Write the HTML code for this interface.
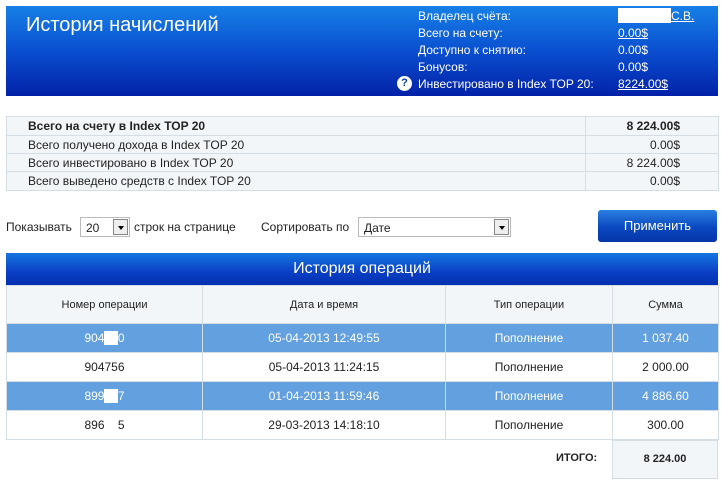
<!DOCTYPE html>
<html><head><meta charset="utf-8"><style>
body{margin:0;width:721px;height:483px;background:#fff;font-family:"Liberation Sans",sans-serif;font-size:12px;color:#222;position:relative;overflow:hidden}
.a{position:absolute}
.hdr{left:6px;top:6px;width:712px;height:90px;background:linear-gradient(#1680e6,#0a4fd0 50%,#0222a8)}
.t1{left:26px;top:14px;color:#fff;font-size:20px}
.lab{color:#fff;font-size:12px;left:418px}
.val{color:#fff;font-size:12px;left:618px;text-decoration:underline}
table{border-collapse:collapse;position:absolute;table-layout:fixed}
.s{left:6px;top:116px;width:712px}
.s td{border:1px solid #d5dde5;background:#f3f6f9;height:17px;padding:0 0 0 21px;font-size:12px;box-sizing:border-box}
.s td.r{text-align:right;padding-right:38px}
.h{left:6px;top:253px;width:712px;height:32px;background:linear-gradient(#1476e0,#0a3fc4 60%,#0230b0);color:#fff;font-size:16px;text-align:center;line-height:32px}
.o{left:6px;top:285px;width:712px}
.o td{border:1px solid #d5dde5;text-align:center;font-size:12px;height:28px;padding:0}
.o tr.hd td{background:#f3f6f9;height:37px;font-size:11px;color:#222}
.o tr.b td{background:#62a0e0;color:#fff}
.sel{border:1px solid #bbb;height:20px;background:#fff;font-size:12px;line-height:20px;padding-left:5px;box-sizing:border-box}
.ar{position:absolute;right:1px;top:1px;width:15px;height:16px;border:1px solid #888;background:#eee;box-sizing:border-box}
.ar:after{content:"";position:absolute;left:4px;top:6px;border:3px solid transparent;border-top:4px solid #000}
</style></head><body>
<div class="a hdr"></div>
<div class="a t1">История начислений</div>
<div class="a lab" style="top:9px">Владелец счёта:</div>
<div class="a lab" style="top:26px">Всего на счету:</div>
<div class="a lab" style="top:43px">Доступно к снятию:</div>
<div class="a lab" style="top:60px">Бонусов:</div>
<div class="a lab" style="top:77px">Инвестировано в Index TOP 20:</div>
<div class="a" style="left:397px;top:76px;width:15px;height:15px;border-radius:50%;background:#fff;color:#0a3aaf;font-weight:bold;font-size:11px;text-align:center;line-height:15px">?</div>
<div class="a" style="left:618px;top:8px;width:53px;height:15px;background:#fff"></div>
<div class="a val" style="left:671px;top:9px">С.В.</div>
<div class="a val" style="top:26px">0.00$</div>
<div class="a val" style="top:43px;text-decoration:none">0.00$</div>
<div class="a val" style="top:60px;text-decoration:none">0.00$</div>
<div class="a val" style="top:77px">8224.00$</div>
<table class="s">
<colgroup><col style="width:579px"><col style="width:133px"></colgroup>
<tr><td style="font-weight:bold;height:19px">Всего на счету в Index TOP 20</td><td class="r" style="font-weight:bold">8 224.00$</td></tr>
<tr><td style="height:18px">Всего получено дохода в Index TOP 20</td><td class="r">0.00$</td></tr>
<tr><td style="height:18px">Всего инвестировано в Index TOP 20</td><td class="r">8 224.00$</td></tr>
<tr><td style="height:19px">Всего выведено средств с Index TOP 20</td><td class="r">0.00$</td></tr>
</table>
<div class="a" style="left:6px;top:220px">Показывать</div>
<div class="a sel" style="left:80px;top:217px;width:50px">20<span class="ar"></span></div>
<div class="a" style="left:134px;top:220px">строк на странице</div>
<div class="a" style="left:261px;top:220px">Сортировать по</div>
<div class="a sel" style="left:358px;top:217px;width:153px">Дате<span class="ar"></span></div>
<div class="a" style="left:598px;top:210px;width:119px;height:32px;border-radius:3px;background:linear-gradient(#2a7fe0,#0a48c0 55%,#0535a8);color:#fff;font-size:13px;text-align:center;line-height:32px">Применить</div>
<div class="a h">История операций</div>
<table class="o">
<colgroup><col style="width:196px"><col style="width:243px"><col style="width:167px"><col style="width:106px"></colgroup>
<tr class="hd"><td>Номер операции</td><td>Дата и время</td><td>Тип операции</td><td>Сумма</td></tr>
<tr class="b"><td>904<span style="background:#fff;color:#fff">00</span>0</td><td>05-04-2013 12:49:55</td><td>Пополнение</td><td>1 037.40</td></tr>
<tr><td>904756</td><td>05-04-2013 11:24:15</td><td>Пополнение</td><td>2 000.00</td></tr>
<tr class="b"><td>899<span style="background:#fff;color:#fff">00</span>7</td><td>01-04-2013 11:59:46</td><td>Пополнение</td><td>4 886.60</td></tr>
<tr><td>896&nbsp;&nbsp;&nbsp;&nbsp;5</td><td>29-03-2013 14:18:10</td><td>Пополнение</td><td>300.00</td></tr>
</table>
<div class="a" style="left:556px;top:452px;font-weight:bold;font-size:11px">ИТОГО:</div>
<div class="a" style="left:612px;top:440px;width:104px;height:37px;background:#f3f6f9;border:1px solid #d5dde5;text-align:center;line-height:37px;font-weight:bold;font-size:11px">8 224.00</div>
</body></html>
